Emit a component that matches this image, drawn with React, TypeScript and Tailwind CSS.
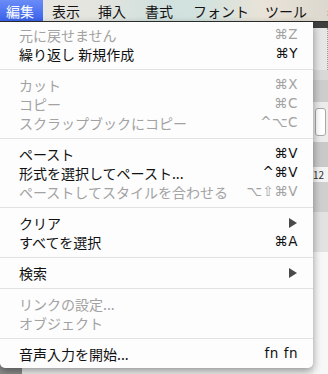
import React from "react";

type Item = {
  label: string;
  shortcut?: string;
  disabled?: boolean;
  submenu?: boolean;
};

// groups of the 編集 menu, separators go between groups
const groups: Item[][] = [
  [
    { label: "元に戻せません", shortcut: "⌘Z", disabled: true },
    { label: "繰り返し 新規作成", shortcut: "⌘Y" },
  ],
  [
    { label: "カット", shortcut: "⌘X", disabled: true },
    { label: "コピー", shortcut: "⌘C", disabled: true },
    { label: "スクラップブックにコピー", shortcut: "^⌥C", disabled: true },
  ],
  [
    { label: "ペースト", shortcut: "⌘V" },
    { label: "形式を選択してペースト...", shortcut: "^⌘V" },
    { label: "ペーストしてスタイルを合わせる", shortcut: "⌥⇧⌘V", disabled: true },
  ],
  [
    { label: "クリア", submenu: true },
    { label: "すべてを選択", shortcut: "⌘A" },
  ],
  [{ label: "検索", submenu: true }],
  [
    { label: "リンクの設定...", disabled: true },
    { label: "オブジェクト", disabled: true },
  ],
  [{ label: "音声入力を開始...", shortcut: "fn fn" }],
];

const menus = [
  { label: "編集", w: "w-[43px] pl-[6px]", active: true },
  { label: "表示", w: "w-[46px] pl-[9px]" },
  { label: "挿入", w: "w-[47px] pl-[9px]" },
  { label: "書式", w: "w-[48px] pl-[9px]" },
  { label: "フォント", w: "w-[72px] pl-[9px]" },
  { label: "ツール", w: "w-[62px] pl-[9px]" },
  { label: "表", w: "w-[40px] pl-[9px]" },
];

function Arrow() {
  return (
    <svg width="8" height="10" viewBox="0 0 8 10" className="mr-[1px]">
      <path d="M0 0 L8 5 L0 10 Z" fill="#4a4a4a" />
    </svg>
  );
}

function Row({ item }: { item: Item }) {
  const color = item.disabled ? "text-[#a2a2a2]" : "text-[#111]";
  return (
    <div className={`flex h-[19px] items-center justify-between pl-[19px] pr-[15px] ${color}`}>
      <span className="text-[14px] leading-none">{item.label}</span>
      {item.submenu ? (
        <Arrow />
      ) : (
        <span className="font-['DejaVu_Sans',sans-serif] text-[13.5px] leading-none tracking-[0.5px]">
          {item.shortcut}
        </span>
      )}
    </div>
  );
}

export default function App() {
  return (
    <div className="flex h-[374px] w-[328px] flex-col overflow-hidden bg-[#f2f2f2] font-['Noto_Sans_CJK_JP','Noto_Sans',sans-serif]">
      {/* menu bar */}
      <div className="flex h-[22px] shrink-0 overflow-hidden border-b border-[#2f2f2f] bg-[linear-gradient(90deg,#ebe8e2_0%,#e4e4df_30%,#d0e1de_48%,#d3e2de_62%,#e9e3d8_80%,#ddd8cf_100%)]">
        {menus.map((m) => (
          <div
            key={m.label}
            className={`flex h-full shrink-0 items-center text-[14px] leading-none ${m.w} ${
              m.active
                ? "bg-[linear-gradient(#6a8cf7,#3a62ec)] text-white"
                : "text-[#141414]"
            }`}
          >
            {m.label}
          </div>
        ))}
      </div>

      {/* app window behind the menu */}
      <div className="relative flex flex-1">
        <div className="h-[10px] w-[22px] self-end bg-[#8c8c8c]" />
        <div className="flex-1" />
        <div className="flex w-[15px] flex-col">
          <div className="h-[6px] bg-[#3f3f3f]" />
          <div className="h-[42px] border-r border-dotted border-[#9a9a9a] bg-[#e6e6e6]" />
          <div className="h-[10px] bg-[#d8d8d8]" />
          <div className="h-[22px] bg-[#cdcdcd]" />
          <div className="h-[40px] bg-[#ebebeb] px-[2px] py-[6px]">
            <div className="h-full rounded-[3px] border border-[#a8a8a8] bg-white" />
          </div>
          <div className="h-[25px] bg-[#c9c9c9]" />
          <div className="h-[15px] bg-[#f4f4f4] text-[10px] leading-[15px] text-[#333]">12</div>
          <div className="h-[30px] bg-[#cfcfcf]" />
          <div className="h-[40px] bg-[#e2e2e2]" />
          <div className="flex-1 bg-[#f7f7f7]" />
        </div>

        {/* 編集 dropdown */}
        <div className="absolute left-0 top-0 w-[313px] rounded-b-[5px] bg-[#fdfdfd] pb-[5px] pt-[3px] shadow-[0_3px_9px_rgba(0,0,0,0.4)]">
          {groups.map((g, i) => (
            <div key={i}>
              {i > 0 && <div className="mb-[5px] mt-[6px] h-px bg-[#e2e2e2]" />}
              {g.map((item) => (
                <Row key={item.label} item={item} />
              ))}
            </div>
          ))}
        </div>
      </div>
    </div>
  );
}
